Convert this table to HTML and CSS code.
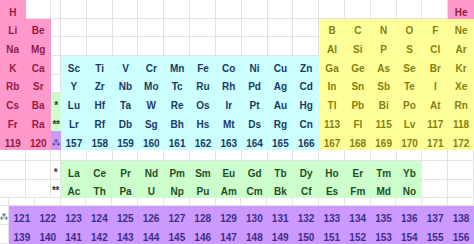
FILE: index.html
```html
<!DOCTYPE html>
<html>
<head>
<meta charset="utf-8">
<link rel="stylesheet" href="styles.css">
</head>
<body>
<div class="sheet">
  <div class="grid main">
    <!-- row 1 -->
    <div class="c p">H</div><div class="c e"></div><div class="c e"></div>
    <div class="c e"></div><div class="c e"></div><div class="c e"></div><div class="c e"></div><div class="c e"></div><div class="c e"></div><div class="c e"></div><div class="c e"></div><div class="c e"></div><div class="c e"></div><div class="c e"></div><div class="c e"></div><div class="c e"></div><div class="c e"></div><div class="c e"></div>
    <div class="c p">He</div>
    <!-- row 2 -->
    <div class="c p">Li</div><div class="c p">Be</div><div class="c e"></div>
    <div class="c e"></div><div class="c e"></div><div class="c e"></div><div class="c e"></div><div class="c e"></div><div class="c e"></div><div class="c e"></div><div class="c e"></div><div class="c e"></div><div class="c e"></div>
    <div class="c y">B</div><div class="c y">C</div><div class="c y">N</div><div class="c y">O</div><div class="c y">F</div><div class="c y">Ne</div>
    <!-- row 3 -->
    <div class="c p">Na</div><div class="c p">Mg</div><div class="c e"></div>
    <div class="c e"></div><div class="c e"></div><div class="c e"></div><div class="c e"></div><div class="c e"></div><div class="c e"></div><div class="c e"></div><div class="c e"></div><div class="c e"></div><div class="c e"></div>
    <div class="c y">Al</div><div class="c y">Si</div><div class="c y">P</div><div class="c y">S</div><div class="c y">Cl</div><div class="c y">Ar</div>
    <!-- row 4 -->
    <div class="c p">K</div><div class="c p">Ca</div><div class="c e"></div>
    <div class="c b">Sc</div><div class="c b">Ti</div><div class="c b">V</div><div class="c b">Cr</div><div class="c b">Mn</div><div class="c b">Fe</div><div class="c b">Co</div><div class="c b">Ni</div><div class="c b">Cu</div><div class="c b">Zn</div>
    <div class="c y">Ga</div><div class="c y">Ge</div><div class="c y">As</div><div class="c y">Se</div><div class="c y">Br</div><div class="c y">Kr</div>
    <!-- row 5 -->
    <div class="c p">Rb</div><div class="c p">Sr</div><div class="c e"></div>
    <div class="c b">Y</div><div class="c b">Zr</div><div class="c b">Nb</div><div class="c b">Mo</div><div class="c b">Tc</div><div class="c b">Ru</div><div class="c b">Rh</div><div class="c b">Pd</div><div class="c b">Ag</div><div class="c b">Cd</div>
    <div class="c y">In</div><div class="c y">Sn</div><div class="c y">Sb</div><div class="c y">Te</div><div class="c y">I</div><div class="c y">Xe</div>
    <!-- row 6 -->
    <div class="c p">Cs</div><div class="c p">Ba</div><div class="c g star">*</div>
    <div class="c b">Lu</div><div class="c b">Hf</div><div class="c b">Ta</div><div class="c b">W</div><div class="c b">Re</div><div class="c b">Os</div><div class="c b">Ir</div><div class="c b">Pt</div><div class="c b">Au</div><div class="c b">Hg</div>
    <div class="c y">Tl</div><div class="c y">Pb</div><div class="c y">Bi</div><div class="c y">Po</div><div class="c y">At</div><div class="c y">Rn</div>
    <!-- row 7 -->
    <div class="c p">Fr</div><div class="c p">Ra</div><div class="c g star">**</div>
    <div class="c b">Lr</div><div class="c b">Rf</div><div class="c b">Db</div><div class="c b">Sg</div><div class="c b">Bh</div><div class="c b">Hs</div><div class="c b">Mt</div><div class="c b">Ds</div><div class="c b">Rg</div><div class="c b">Cn</div>
    <div class="c y">113</div><div class="c y">Fl</div><div class="c y">115</div><div class="c y">Lv</div><div class="c y">117</div><div class="c y">118</div>
    <!-- row 8 -->
    <div class="c p">119</div><div class="c p">120</div><div class="c v star tri">⁂</div>
    <div class="c b">157</div><div class="c b">158</div><div class="c b">159</div><div class="c b">160</div><div class="c b">161</div><div class="c b">162</div><div class="c b">163</div><div class="c b">164</div><div class="c b">165</div><div class="c b">166</div>
    <div class="c y">167</div><div class="c y">168</div><div class="c y">169</div><div class="c y">170</div><div class="c y">171</div><div class="c y">172</div>
    <!-- gap row -->
    <div class="c e"></div><div class="c e"></div><div class="c e"></div><div class="c e"></div><div class="c e"></div><div class="c e"></div><div class="c e"></div><div class="c e"></div><div class="c e"></div><div class="c e"></div><div class="c e"></div><div class="c e"></div><div class="c e"></div><div class="c e"></div><div class="c e"></div><div class="c e"></div><div class="c e"></div><div class="c e"></div><div class="c e"></div>
    <!-- lanthanides -->
    <div class="c e"></div><div class="c e"></div><div class="c e star">*</div>
    <div class="c g">La</div><div class="c g">Ce</div><div class="c g">Pr</div><div class="c g">Nd</div><div class="c g">Pm</div><div class="c g">Sm</div><div class="c g">Eu</div><div class="c g">Gd</div><div class="c g">Tb</div><div class="c g">Dy</div><div class="c g">Ho</div><div class="c g">Er</div><div class="c g">Tm</div><div class="c g">Yb</div>
    <div class="c e"></div><div class="c e"></div>
    <!-- actinides -->
    <div class="c e"></div><div class="c e"></div><div class="c e star">**</div>
    <div class="c g">Ac</div><div class="c g">Th</div><div class="c g">Pa</div><div class="c g">U</div><div class="c g">Np</div><div class="c g">Pu</div><div class="c g">Am</div><div class="c g">Cm</div><div class="c g">Bk</div><div class="c g">Cf</div><div class="c g">Es</div><div class="c g">Fm</div><div class="c g">Md</div><div class="c g">No</div>
    <div class="c e"></div><div class="c e"></div>
  </div>
  <div class="grid bottom">
    <!-- gap row -->
    <div class="c e"></div><div class="c e"></div><div class="c e"></div><div class="c e"></div><div class="c e"></div><div class="c e"></div><div class="c e"></div><div class="c e"></div><div class="c e"></div><div class="c e"></div><div class="c e"></div><div class="c e"></div><div class="c e"></div><div class="c e"></div><div class="c e"></div><div class="c e"></div><div class="c e"></div><div class="c e"></div><div class="c e"></div>
    <!-- row 121 -->
    <div class="c e star tri">⁂</div>
    <div class="c v">121</div><div class="c v">122</div><div class="c v">123</div><div class="c v">124</div><div class="c v">125</div><div class="c v">126</div><div class="c v">127</div><div class="c v">128</div><div class="c v">129</div><div class="c v">130</div><div class="c v">131</div><div class="c v">132</div><div class="c v">133</div><div class="c v">134</div><div class="c v">135</div><div class="c v">136</div><div class="c v">137</div><div class="c v">138</div>
    <!-- row 139 -->
    <div class="c e"></div>
    <div class="c v">139</div><div class="c v">140</div><div class="c v">141</div><div class="c v">142</div><div class="c v">143</div><div class="c v">144</div><div class="c v">145</div><div class="c v">146</div><div class="c v">147</div><div class="c v">148</div><div class="c v">149</div><div class="c v">150</div><div class="c v">151</div><div class="c v">152</div><div class="c v">153</div><div class="c v">154</div><div class="c v">155</div><div class="c v">156</div>
  </div>
</div>
</body>
</html>
```
FILE: styles.css
```css
html, body {
  margin: 0;
  padding: 0;
  background: #ffffff;
}
.sheet {
  width: 474px;
  height: 244px;
  overflow: hidden;
  font-family: "Liberation Sans", Arial, sans-serif;
  font-weight: bold;
  font-size: 10px;
}
.grid {
  display: grid;
}
.main {
  grid-template-columns: 25.5px 25.5px 10px repeat(16, 25.8125px);
  grid-template-rows: repeat(8, 18.7px) 11.4px 18.7px 18.7px;
}
.bottom {
  grid-template-columns: 9px repeat(18, 25.8333px);
  grid-template-rows: 8.1px 18.75px 18.75px;
}
.c {
  box-sizing: border-box;
  display: flex;
  align-items: flex-end;
  justify-content: center;
  line-height: 11px;
  padding-bottom: 1px;
  white-space: nowrap;
  overflow: hidden;
}
.e {
  border-right: 1px solid #e2e2e2;
  border-bottom: 1px solid #e2e2e2;
}
.p { background: #ff99cc; color: #951a42; }
.y { background: #ffff99; color: #858011; }
.b { background: #ccffff; color: #1a3a66; }
.g { background: #ccffcc; color: #1f4f1f; }
.v { background: #cc99ff; color: #3b2f8a; }
.star {
  color: #333333;
  letter-spacing: -0.5px;
}
.g.star { color: #333333; }
.tri {
  font-family: "DejaVu Sans", sans-serif;
  font-weight: normal;
  font-size: 9px;
  line-height: 10px;
  letter-spacing: 0;
  padding-bottom: 2px;
}
```
